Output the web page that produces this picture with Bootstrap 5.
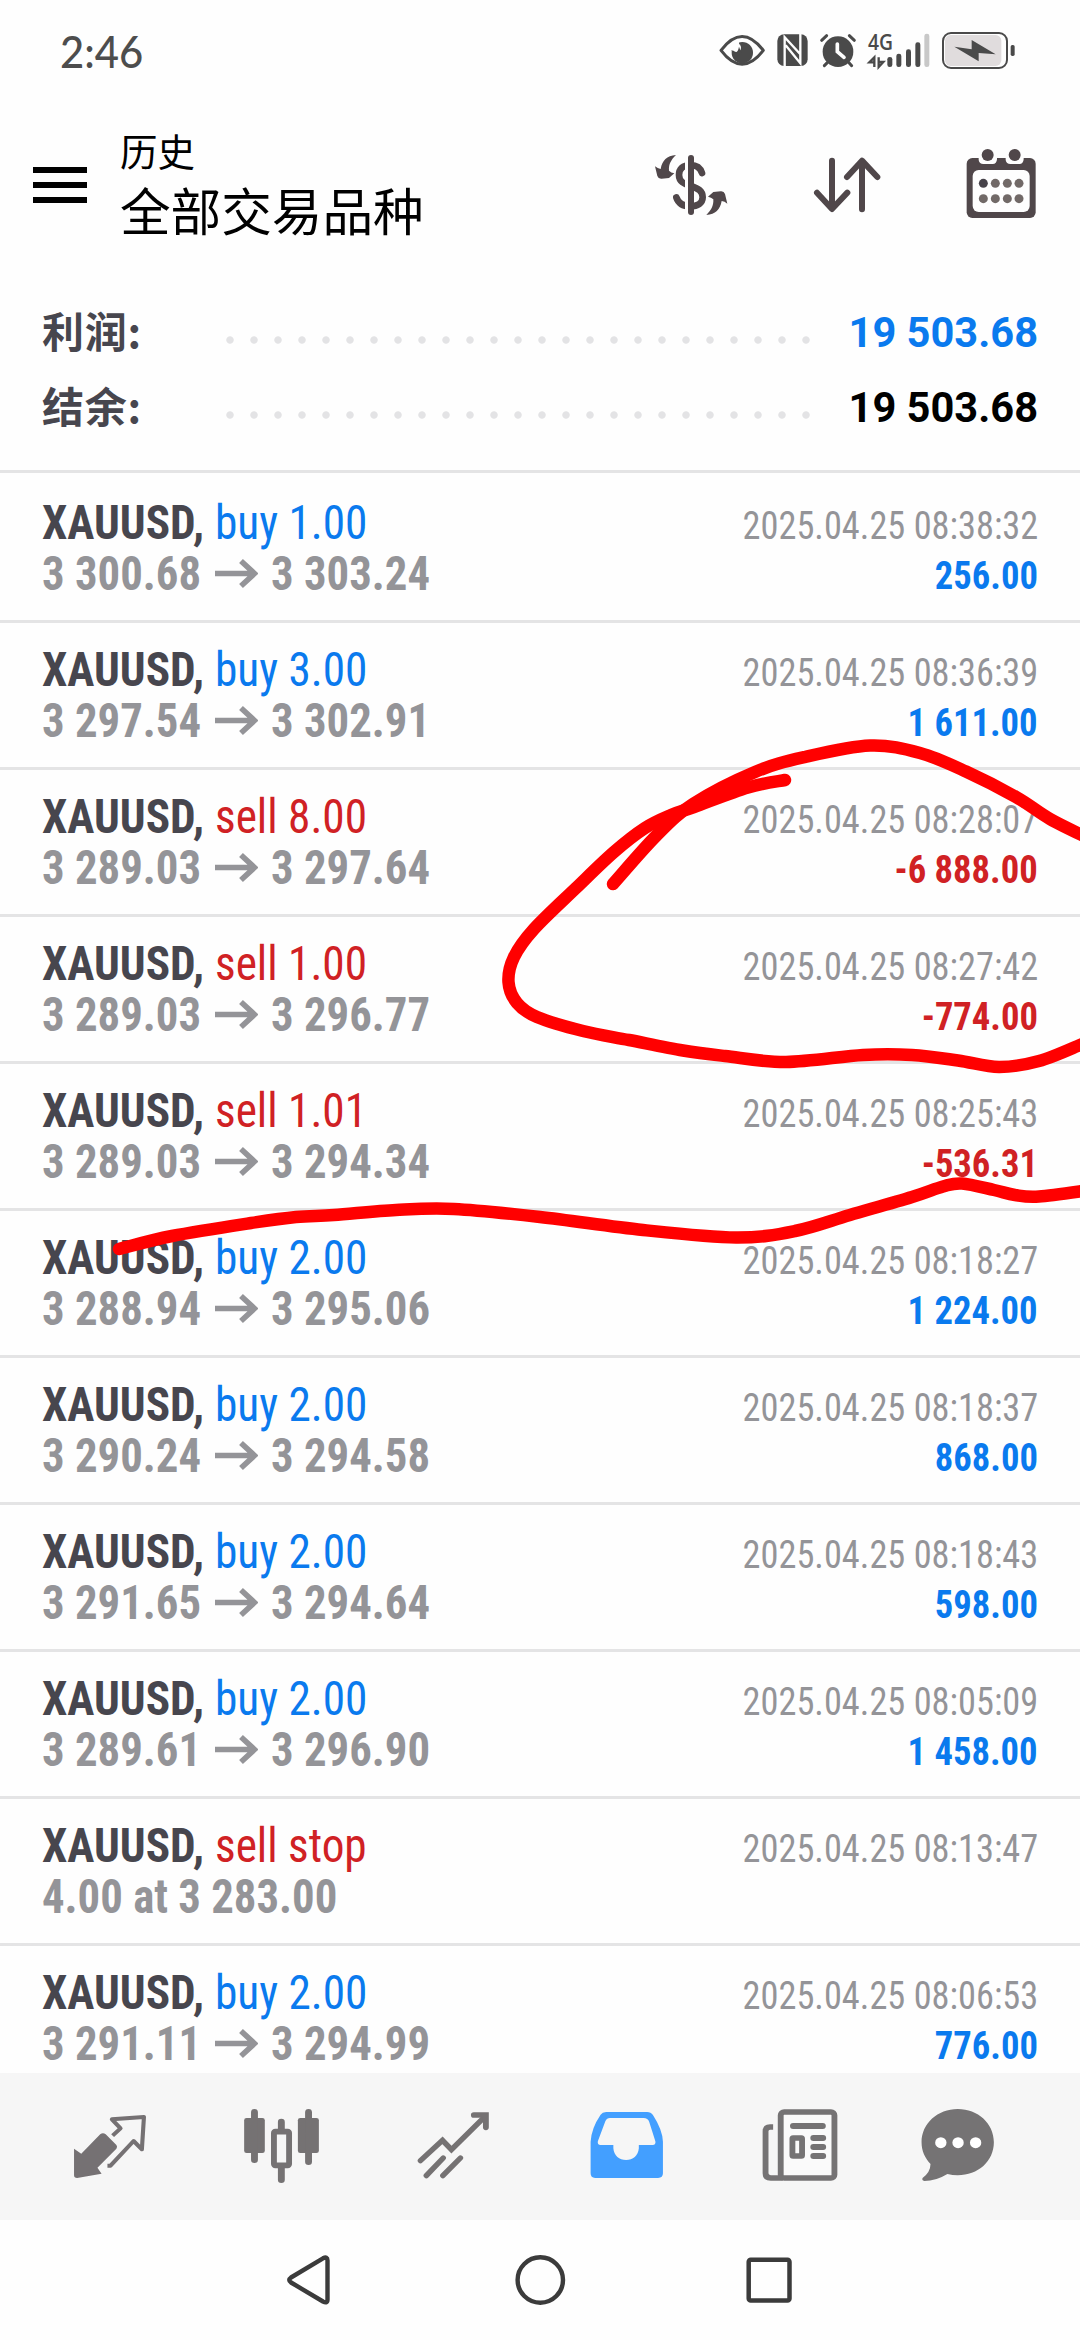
<!DOCTYPE html>
<html lang="zh-CN">
<head>
<meta charset="utf-8">
<title>历史</title>
<link href="https://cdn.jsdelivr.net/npm/bootstrap@5.3.0/dist/css/bootstrap.min.css" rel="stylesheet">
<script src="https://cdn.jsdelivr.net/npm/bootstrap@5.3.0/dist/js/bootstrap.bundle.min.js"></script>
<style>
:root{--ink:#47464e;--up:#0a7aee;--down:#d02124;--muted-ink:#949498}
body{width:1080px;height:2340px;overflow:hidden;background:#fefefe;color:#000;font-family:Roboto,"Noto Sans CJK SC",sans-serif}
svg{display:block;flex:none}
.statusbar{height:100px;padding:0 60px}
.clock{font:500 44px/60px Lato,sans-serif;color:#4d4d4d;margin-top:21px;transform:scaleX(.95);transform-origin:left}
.appbar{height:172px;padding:0 44px 0 33px}
.titles{margin-left:33px;padding-top:25px}
.title-sub{font:400 37.5px/50px "Noto Sans CJK SC",sans-serif}
.title-main{font:400 50.6px/60px "Noto Sans CJK SC",sans-serif;margin-top:4px}
.summary{height:201px;padding:22px 42px 0 42px;border-bottom:3px solid #e4e4e5}
.sum-line{height:75px}
.sum-label{width:177px;font:700 42px/75px "Noto Sans CJK SC",sans-serif;color:var(--ink);margin-top:-5px;letter-spacing:.8px}
.dots{width:600px;height:24px;margin-top:16px;margin-left:-1px;background:radial-gradient(circle at 50% 50%,#e3e3e5 3.3px,transparent 4.1px) 0 0/24px 24px repeat-x}
.sum-value{font:700 41.6px/75px Roboto,sans-serif;padding-top:1px}
.deals{height:1600px;padding-top:3px;overflow:hidden}
.deal{height:147px;padding:22px 42px 20px 42px;border-bottom:3px solid #e4e4e5;font-family:"Roboto Condensed",Roboto,sans-serif;line-height:51px;white-space:pre}
.deal .line{height:51px}
.sym{width:173px;font-size:47.5px;font-weight:700;color:var(--ink)}
.kind{font-size:47.5px}
.price{font-size:47.5px;font-weight:700;color:var(--muted-ink)}
.price-open{width:173px}
.price-close{margin-left:13px}
.when{font-size:39px;color:var(--muted-ink)}
.amount{font-size:39px;font-weight:700;padding-top:2px}
.nar{display:inline-block;transform:scaleX(.953);transform-origin:left}
.price .nar{transform:scaleX(.942)}
.nar-r{display:inline-block;transform:scaleX(.938);transform-origin:right}
.when .nar-r{transform:scaleX(.932)}
.up{color:var(--up)}.down{color:var(--down)}
.tabs{height:147px;background:#f6f6f6}
.sysnav{height:120px}
.pen{pointer-events:none}
</style>
</head>
<body class="position-relative d-flex flex-column">

<header class="statusbar d-flex justify-content-between">
  <div class="clock">2:46</div>
  <svg width="305" height="100" viewBox="285 0 915 300" fill="#4a4a4a" stroke="none">
    <path d="M303 151Q366 68 430 151Q366 234 303 151Z" fill="none" stroke="#4a4a4a" stroke-width="9" stroke-linejoin="round"/>
    <circle cx="367" cy="158" r="32"/>
    <path d="M357 124C359 140 352 152 334 152L330 136Z" fill="#fefefe"/><circle cx="350" cy="143" r="13" fill="#fefefe"/><path d="M334 150Q352 168 357 140L364 158L344 176Z"/>
    <rect x="472" y="103" width="91" height="95" rx="20"/>
    <path d="M494 202V112L541 163M497 136L541 190V100" fill="none" stroke="#fefefe" stroke-width="7"/>
    <circle cx="654" cy="155" r="46"/>
    <path d="M652 132V155L672 172" fill="none" stroke="#fefefe" stroke-width="11" stroke-linecap="round"/>
    <path d="M605 121L620 107M688 107L703 121M622 188L613 197M687 188L695 197" stroke="#4a4a4a" stroke-width="9" stroke-linecap="round"/>
    <text x="744" y="150" font-family="Open Sans,sans-serif" font-weight="600" font-size="64" textLength="75" lengthAdjust="spacingAndGlyphs">4G</text>
    <path d="M763 201V172L748 187H763M776 172V201L790 186H776" fill="none" stroke="#4a4a4a" stroke-width="7"/>
    <rect x="802" y="171" width="15" height="30" rx="7"/><rect x="829" y="161" width="15" height="40" rx="7"/><rect x="858" y="148" width="15" height="53" rx="7"/><rect x="886" y="127" width="15" height="74" rx="7"/><rect x="913" y="101" width="15" height="100" rx="7" fill="#c8c8c8"/>
    <rect x="969" y="99" width="192" height="105" rx="24" fill="#fefefe" stroke="#4a4a4a" stroke-width="6"/>
    <rect x="975" y="105" width="169" height="93" rx="17" fill="#e0dcdd"/>
    <path d="M1003 140L1055 148V120L1127 163L1076 159V184Z"/>
    <rect x="1172" y="135" width="12" height="33" rx="5"/>
  </svg>
</header>

<nav class="appbar d-flex align-items-start">
  <svg class="mt-1" width="54" height="110" viewBox="0 104 54 110"><path d="M0 170H54M0 185H54M0 200H54" stroke="#000" stroke-width="6"/></svg>
  <div class="titles">
    <div class="title-sub">历史</div>
    <div class="title-main">全部交易品种</div>
  </div>
  <svg class="ms-auto" width="74" height="172" viewBox="99 300 222 516">
    <path d="M243 519C238 503 226 495 208 495C186 495 174 507 174 525C174 545 190 552 208 558C232 565 245 573 245 592C245 609 230 619 208 619C184 619 172 610 166 592" fill="none" stroke="#50474a" stroke-width="20" stroke-linecap="round"/>
    <path d="M192 480h10v160h-10z" fill="#fefefe"/>
    <path d="M210 474V636" stroke="#50474a" stroke-width="18" stroke-linecap="round"/>
    <path id="turn" d="M165 465C137 468 124 480 119 507Q110 506 102 499L109 528Q112 537 122 536L144 534L160 520Q150 518 144 512C143 492 150 480 165 465Z" fill="#50474a"/>
    <use href="#turn" transform="rotate(180 210.500 555)"/>
  </svg>
  <svg width="70" height="172" viewBox="573 300 210 516" style="margin-left:84px">
    <path d="M633 482V626M588 578L633 627L679 578M723 628V484M678 531L723 482L769 531" fill="none" stroke="#50474a" stroke-width="18" stroke-linecap="round" stroke-linejoin="round"/>
  </svg>
  <svg width="70" height="172" viewBox="1036 300 210 516" style="margin-left:84px">
    <rect x="1038" y="474" width="207" height="180" rx="17" fill="#50474a"/>
    <path d="M1074 470V480Q1076 492 1088 492H1116Q1128 492 1129 478V470ZM1155 470V480Q1157 492 1169 492H1196Q1208 492 1209 478V470Z" fill="#fefefe"/>
    <circle cx="1101" cy="465" r="18" fill="#50474a"/><circle cx="1182" cy="465" r="18" fill="#50474a"/>
    <rect x="1056" y="510" width="171" height="126" rx="18" fill="#fefefe"/>
    <g fill="#716967"><circle cx="1088" cy="550" r="13.500" fill="#47434a"/><circle cx="1124" cy="550" r="13.500"/><circle cx="1160" cy="550" r="13.500"/><circle cx="1195" cy="550" r="13.500"/><circle cx="1088" cy="596" r="13.500"/><circle cx="1124" cy="596" r="13.500"/><circle cx="1160" cy="596" r="13.500"/><circle cx="1195" cy="596" r="13.500"/></g>
  </svg>
</nav>

<section class="summary">
  <div class="sum-line d-flex align-items-center"><span class="sum-label">利润:</span><span class="dots"></span><span class="sum-value up ms-auto">19 503.68</span></div>
  <div class="sum-line d-flex align-items-center"><span class="sum-label">结余:</span><span class="dots"></span><span class="sum-value ms-auto">19 503.68</span></div>
</section>

<main class="deals" id="deals"></main>

<nav class="tabs d-flex">
  <svg width="180" height="147" viewBox="0 2073 180 147"><g transform="translate(0 2050) scale(.34436 .33333)">
    <path d="M215 296L236 311L291 253Q299 246 307 253L338 285Q342 290 338 296L283 353L295 371L224 384Q215 384 215 376Z" fill="#757173"/>
    <path d="M327 257L350 235L325 208L418 201L412 298L388 273L321 347H312" fill="none" stroke="#757173" stroke-width="12" stroke-linejoin="round"/></g></svg>
  <svg width="180" height="147" viewBox="180 2073 180 147"><g transform="translate(0 2050) scale(.34436 .33333)" fill="#757273">
    <rect x="709" y="204" width="60" height="105" rx="7"/><rect x="865" y="204" width="61" height="105" rx="7"/>
    <path d="M739 187V329M896 187V335M817 216V240M817 350V389" stroke="#757273" stroke-width="20" stroke-linecap="round"/>
    <rect x="795.500" y="245" width="44" height="101" rx="4" fill="#f6f6f6" stroke="#757273" stroke-width="17"/></g></svg>
  <svg width="180" height="147" viewBox="360 2073 180 147"><g transform="translate(0 2050) scale(.34436 .33333)" fill="none" stroke="#757273" stroke-width="16" stroke-linecap="round">
    <path d="M1221 332L1285 271L1311 299L1408 200M1238 377L1287 324M1286 377L1337 324"/><path d="M1376 195H1411V232" stroke-width="17"/></g></svg>
  <svg width="180" height="147" viewBox="540 2073 180 147"><g transform="translate(540 2050) scale(.34436 .33333)" fill="#439fff">
    <path fill-rule="evenodd" d="M192 186H311Q322 186 328 195Q356 240 357 275V370Q357 384 343 384H160Q147 384 147 370V275Q149 235 176 194Q181 186 192 186ZM203 204Q194 204 190 213L168 274Q166 285 176 285H213V295C215 318 230 330 250 330S285 318 287 295V285H327Q337 285 335 274L317 215Q313 204 301 204Z"/></g></svg>
  <svg width="180" height="147" viewBox="720 2073 180 147"><g transform="translate(540 2050) scale(.34436 .33333)" fill="none" stroke="#757374" stroke-width="17">
    <rect x="699" y="186" width="156" height="198" rx="10" fill="#fafafa"/>
    <path d="M677 231H668Q655 231 655 244V370Q655 384 670 384H705"/>
    <path d="M735 228H821M794 264H822M794 291H822M794 318H822" stroke-width="18" stroke-linecap="round"/>
    <rect x="733" y="264" width="28" height="54" rx="2"/></g></svg>
  <svg width="180" height="147" viewBox="900 2073 180 147"><g transform="translate(540 2050) scale(.34436 .33333)" fill="#757374">
    <path d="M1213 177C1272 177 1318 220 1318 277S1272 376 1213 376Q1198 376 1183 372Q1150 393 1116 393Q1108 391 1111 384Q1134 366 1134 342C1118 325 1108 303 1108 277C1108 220 1155 177 1213 177Z"/>
    <g fill="#fff"><circle cx="1164" cy="278" r="16.500"/><circle cx="1214" cy="278" r="16.500"/><circle cx="1265" cy="278" r="16.500"/></g></g></svg>
</nav>

<nav class="sysnav d-flex justify-content-center">
  <svg width="230" height="120" viewBox="195 2220 230 120"><path d="M291 2277.500L323 2258.300Q327.500 2256 327.500 2260.500V2299.500Q327.500 2304 323 2301.500L291 2282.500Q287.500 2280 291 2277.500Z" fill="none" stroke="#3b3b3b" stroke-width="4.400" stroke-linejoin="round"/></svg>
  <svg width="230" height="120" viewBox="425 2220 230 120"><circle cx="540.300" cy="2280" r="22.700" fill="none" stroke="#3b3b3b" stroke-width="4.400"/></svg>
  <svg width="230" height="120" viewBox="655 2220 230 120"><rect x="748.700" y="2259.700" width="40.800" height="40.800" rx="2" fill="none" stroke="#3b3b3b" stroke-width="4.500"/></svg>
</nav>

<svg class="pen position-absolute top-0 start-0" width="1080" height="2340" fill="none" stroke="#f00" stroke-width="12.500" stroke-linecap="round" stroke-linejoin="round" id="pen"></svg>

<script>
const deals = [
  ['buy 1.00','3 300.68','3 303.24','08:38:32','256.00'],
  ['buy 3.00','3 297.54','3 302.91','08:36:39','1 611.00'],
  ['sell 8.00','3 289.03','3 297.64','08:28:07','-6 888.00'],
  ['sell 1.00','3 289.03','3 296.77','08:27:42','-774.00'],
  ['sell 1.01','3 289.03','3 294.34','08:25:43','-536.31'],
  ['buy 2.00','3 288.94','3 295.06','08:18:27','1 224.00'],
  ['buy 2.00','3 290.24','3 294.58','08:18:37','868.00'],
  ['buy 2.00','3 291.65','3 294.64','08:18:43','598.00'],
  ['buy 2.00','3 289.61','3 296.90','08:05:09','1 458.00'],
  ['sell stop','4.00 at 3 283.00','','08:13:47',''],
  ['buy 2.00','3 291.11','3 294.99','08:06:53','776.00']
];
const arrow = '<svg width="43" height="51" viewBox="0 0 43 51"><path d="M0 24.500H39M26 12L39.500 24.500L26 37" fill="none" stroke="#949498" stroke-width="5.600"/></svg>';
document.getElementById('deals').innerHTML = deals.map(([kind, open, close, time, amount]) => {
  const side = kind.startsWith('buy') ? 'up' : 'down';
  const prices = close
    ? `<span class="price price-open"><span class="nar">${open}</span></span>${arrow}<span class="price price-close"><span class="nar">${close}</span></span>`
    : `<span class="price"><span class="nar">${open}</span></span>`;
  return `<article class="deal">` +
    `<div class="line d-flex align-items-baseline"><span class="sym"><span class="nar">XAUUSD,</span></span><span class="kind ${side}"><span class="nar">${kind}</span></span><span class="when ms-auto"><span class="nar-r">2025.04.25 ${time}</span></span></div>` +
    `<div class="line d-flex">${prices}<span class="amount ms-auto ${amount.startsWith('-') ? 'down' : 'up'}"><span class="nar-r">${amount}</span></span></div></article>`;
}).join('');

// Freehand strokes: each point list becomes a smooth Catmull-Rom curve.
const strokes = [
  [[613,884],[656,836],[693,804],[755,772],[805,757],[870,745.500],[920,753],[966,771.500],[1016,797],[1050,819],[1090,839]],
  [[1090,1040],[1080,1045],[1039,1061],[999,1067],[958,1060.500],[912,1055],[863,1055],[786,1062],[725,1056],[683,1050.500],[629,1040],[583,1031],[537,1017],[517,1003],[508.500,982],[514,957],[534,929],[576,888],[614,852],[645,828],[671,815],[694,807],[748,787.500],[785,780]],
  [[119,1249],[172,1236],[251,1223],[296,1217],[334,1215],[396,1210],[454,1209],[540,1217],[643,1230],[736,1237.500],[795,1231],[850,1215],[912,1197],[943,1186.500],[962,1183.500],[994,1190],[1015,1195],[1039,1196.500],[1090,1190]]
];
document.getElementById('pen').innerHTML = strokes.map(p => {
  let d = `M${p[0]}`;
  for (let i = 0; i < p.length - 1; i++) {
    const a = p[i-1] || p[i], b = p[i], c = p[i+1], e = p[i+2] || c;
    d += `C${b[0]+(c[0]-a[0])/6} ${b[1]+(c[1]-a[1])/6} ${c[0]-(e[0]-b[0])/6} ${c[1]-(e[1]-b[1])/6} ${c}`;
  }
  return `<path d="${d}"/>`;
}).join('');
</script>
</body>
</html>
